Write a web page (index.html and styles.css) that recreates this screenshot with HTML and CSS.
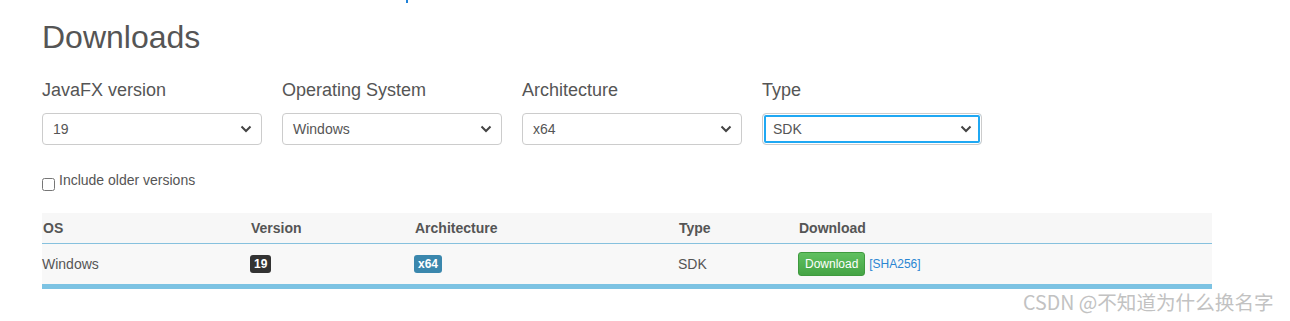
FILE: index.html
```html
<!DOCTYPE html>
<html lang="en">
<head>
    <meta charset="UTF-8">
    <meta name="viewport" content="width=device-width, initial-scale=1.0">
    <title>Downloads</title>
    <link rel="stylesheet" href="styles.css">
</head>
<body>
    <div class="crumb"><span class="crumb-tail"></span></div>
    <div class="page">
        <h1 class="title">Downloads</h1>

        <div class="filters">
            <div class="field">
                <label class="field-label">JavaFX version</label>
                <div class="select">
                    <span>19</span>
                    <svg class="chevron" width="12" height="8" viewBox="0 0 12 8"><path d="M1.5 1.5 L6 6 L10.5 1.5" fill="none" stroke="#444" stroke-width="2"/></svg>
                </div>
            </div>
            <div class="field">
                <label class="field-label">Operating System</label>
                <div class="select">
                    <span>Windows</span>
                    <svg class="chevron" width="12" height="8" viewBox="0 0 12 8"><path d="M1.5 1.5 L6 6 L10.5 1.5" fill="none" stroke="#444" stroke-width="2"/></svg>
                </div>
            </div>
            <div class="field">
                <label class="field-label">Architecture</label>
                <div class="select">
                    <span>x64</span>
                    <svg class="chevron" width="12" height="8" viewBox="0 0 12 8"><path d="M1.5 1.5 L6 6 L10.5 1.5" fill="none" stroke="#444" stroke-width="2"/></svg>
                </div>
            </div>
            <div class="field">
                <label class="field-label">Type</label>
                <div class="select focused">
                    <span>SDK</span>
                    <svg class="chevron" width="12" height="8" viewBox="0 0 12 8"><path d="M1.5 1.5 L6 6 L10.5 1.5" fill="none" stroke="#444" stroke-width="2"/></svg>
                </div>
            </div>
        </div>

        <div class="older">
            <input type="checkbox" class="older-check">
            <span>Include older versions</span>
        </div>

        <div class="table">
            <div class="row head">
                <div class="cell">OS</div>
                <div class="cell">Version</div>
                <div class="cell">Architecture</div>
                <div class="cell">Type</div>
                <div class="cell">Download</div>
            </div>
            <div class="row body-row">
                <div class="cell">Windows</div>
                <div class="cell"><span class="badge dark">19</span></div>
                <div class="cell"><span class="badge info">x64</span></div>
                <div class="cell">SDK</div>
                <div class="cell">
                    <a class="btn-download">Download</a>
                    <a class="sha">[SHA256]</a>
                </div>
            </div>
        </div>
    </div>

    <div class="watermark">CSDN @不知道为什么换名字</div>
</body>
</html>
```

FILE: styles.css
```css
body {
    margin: 0;
    font-family: "Liberation Sans", Arial, sans-serif;
    color: #555;
    background: #fff;
}
.crumb {
    height: 3px;
    padding-left: 406px;
    overflow: hidden;
}
.crumb-tail {
    display: block;
    width: 2px;
    height: 3px;
    background: #1f82d8;
}
.page {
    padding-left: 42px;
    width: 1170px;
}
.title {
    margin: 16px 0 0;
    font-size: 32px;
    line-height: 36px;
    font-weight: normal;
    color: #555;
}
.filters {
    display: flex;
    gap: 20px;
    margin-top: 23px;
}
.field {
    width: 220px;
}
.field-label {
    display: block;
    font-size: 18px;
    line-height: 24px;
    color: #555;
}
.select {
    margin-top: 11px;
    height: 32px;
    box-sizing: border-box;
    border: 1px solid #ccc;
    border-radius: 4px;
    padding: 0 9px 0 10px;
    display: flex;
    align-items: center;
    justify-content: space-between;
    font-size: 14px;
    color: #555;
    background: #fff;
}
.select.focused {
    box-shadow: inset 0 0 0 1px #fff, inset 0 0 0 3px #1fa8f3;
}
.chevron {
    display: block;
}
.older {
    display: flex;
    align-items: flex-start;
    height: 20px;
    margin-top: 25px;
    font-size: 14px;
    line-height: 20px;
    color: #555;
}
.older-check {
    width: 13px;
    height: 13px;
    margin: 8px 4px 0 0;
}
.table {
    margin-top: 23px;
    width: 1170px;
    background: #f8f8f8;
    border-bottom: 5px solid #7dc3e3;
}
.row {
    display: grid;
    grid-template-columns: 208px 164px 264px 120px 1fr;
    align-items: center;
}
.head {
    height: 30px;
    background: #f7f7f7;
    border-bottom: 1px solid #86c1de;
    font-weight: bold;
    font-size: 14px;
    color: #555;
}
.head .cell {
    padding-left: 1px;
}
.body-row {
    height: 40px;
    font-size: 14px;
    color: #555;
}
.badge {
    display: inline-block;
    height: 18px;
    line-height: 18px;
    padding: 0 4px;
    border-radius: 3px;
    font-size: 12px;
    font-weight: bold;
    color: #fff;
    vertical-align: middle;
}
.badge.dark {
    background: #333;
}
.badge.info {
    background: #3a87ad;
}
.btn-download {
    display: inline-block;
    box-sizing: border-box;
    height: 24px;
    line-height: 22px;
    padding: 0 6px;
    border: 1px solid #3f9a3f;
    border-radius: 3px;
    background: linear-gradient(#60c060, #45a445);
    color: #fff;
    font-size: 12px;
    vertical-align: middle;
}
.sha {
    font-size: 12px;
    color: #2a86d2;
    vertical-align: middle;
}
.watermark {
    position: absolute;
    top: 289px;
    left: 1023px;
    font-family: "Noto Sans CJK SC", sans-serif;
    font-size: 19.6px;
    line-height: 26px;
    color: #c2c2c2;
    white-space: nowrap;
}
```
